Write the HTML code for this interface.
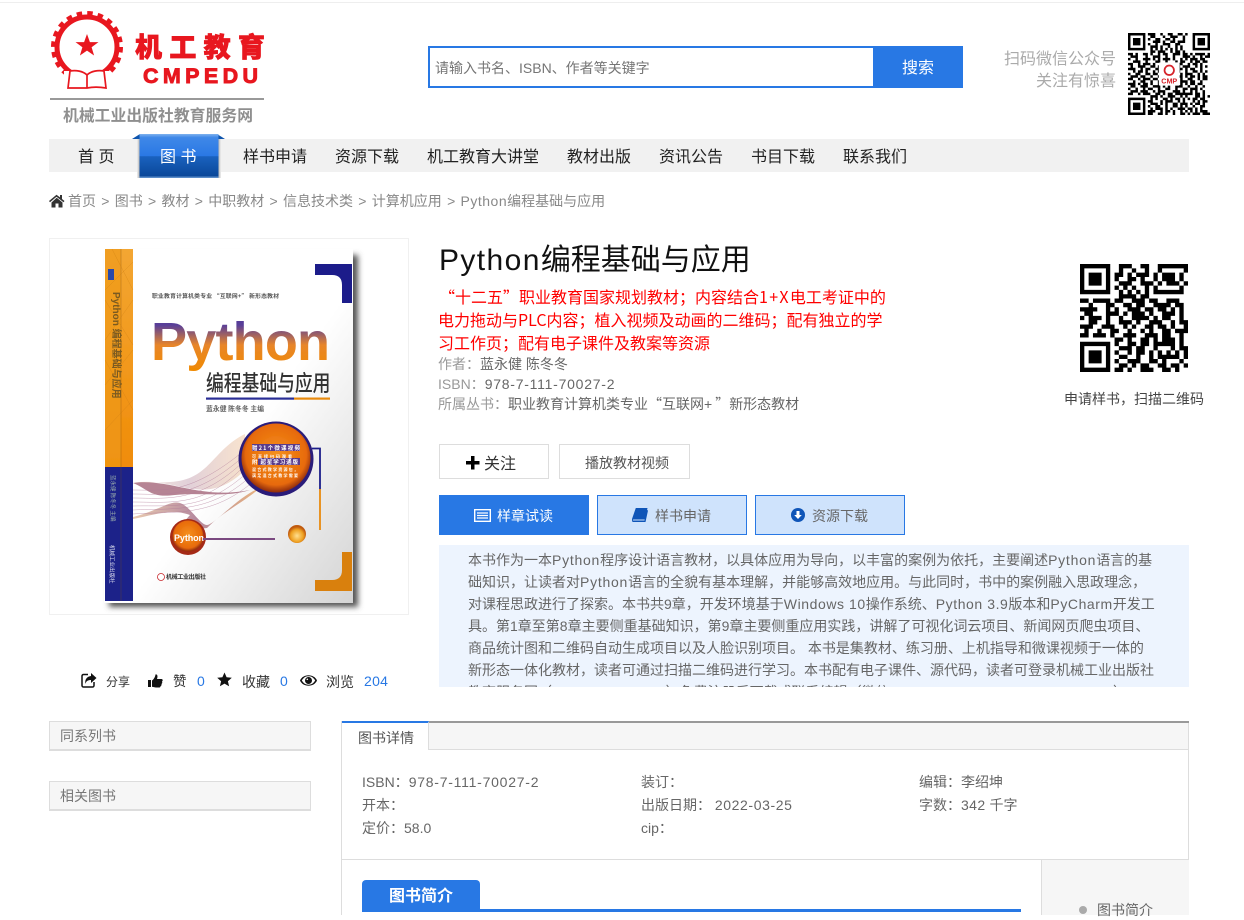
<!DOCTYPE html>
<html lang="zh"><head><meta charset="utf-8"><title>Python编程基础与应用</title>
<style>
html,body{margin:0;padding:0;background:#fff}
body{position:relative;width:1244px;height:915px;overflow:hidden;font-family:"Liberation Sans","Noto Sans CJK SC",sans-serif;font-size:14px;color:#666}
.a{position:absolute;box-sizing:border-box}
.t{position:absolute;white-space:nowrap;line-height:20px;height:20px}
.q{font-family:"Noto Sans CJK SC",sans-serif}
.n{font-size:16px;color:#222;top:148px}
.d{left:468px;color:#666}
.l{letter-spacing:.75px}
.m{letter-spacing:.57px}
.btn{position:absolute;box-sizing:border-box;height:40px;width:150px;top:495px;border:1px solid #2878e4;background:#cfe3fc;color:#666;line-height:41px;font-size:14px}
.box{position:absolute;left:49px;width:262px;height:30px;box-sizing:border-box;background:#f6f6f6;border:1px solid #ddd;border-bottom-width:2px;color:#777;line-height:29px;padding-left:10px}
.r{color:#666}
svg{position:absolute;left:0;top:0}
</style></head><body>
<div class="a" style="left:0;top:2px;width:1244px;height:1px;background:#eee"></div>

<!-- logo -->
<svg width="300" height="130" viewBox="0 0 300 130">
<circle cx="87" cy="47" r="34" fill="none" stroke="#e8171f" stroke-width="4" stroke-dasharray="5.500 5.180"/>
<circle cx="87" cy="47" r="30" fill="#fff" stroke="#e8171f" stroke-width="5"/>
<path d="M87 34l2.900 8.100h8.600l-6.900 5.200 2.500 8.200-7.100-4.900-7.100 4.900 2.500-8.200-6.900-5.200h8.600z" fill="#e8171f"/>
<path d="M64 71h46v20H64z" fill="#fff"/>
<path d="M87 75c-4-4-11-5-17-4l-2 17h19c5-1 13-1 19 0l-2-17c-6-1-13 0-17 4zM87 75v13" fill="#fff" stroke="#e8171f" stroke-width="1.700"/>
<text x="135" y="57" font-family="'Noto Sans CJK SC',sans-serif" font-weight="900" font-size="27" fill="#e8171f" textLength="130" stroke="#e8171f" stroke-width=".7">机工教育</text>
<text x="143" y="83" font-family="'Liberation Sans',sans-serif" font-weight="700" font-size="21.500" fill="#e8171f" textLength="115" stroke="#e8171f" stroke-width=".9">CMPEDU</text>
<rect x="50" y="98" width="214" height="2" fill="#999"/>
<text x="63" y="121" font-family="'Noto Sans CJK SC',sans-serif" font-weight="700" font-size="15.800" fill="#8f8f8f" textLength="190">机械工业出版社教育服务网</text>
</svg>

<!-- search -->
<div class="a" style="left:428px;top:46px;width:535px;height:42px;border:2px solid #2878e4;background:#fff"></div>
<div class="a" style="left:873px;top:46px;width:90px;height:42px;background:#2878e4;color:#fff;font-size:16px;line-height:45px;text-align:center">搜索</div>
<div class="t" style="left:435px;top:58px;color:#757575">请输入书名、ISBN、作者等关键字</div>
<div class="t" style="left:1004px;top:50px;font-size:16px;color:#aaa">扫码微信公众号</div>
<div class="t" style="left:1036px;top:72px;font-size:16px;color:#aaa">关注有惊喜</div>

<!-- small QR -->
<svg style="left:1128px;top:33px" width="82" height="82" viewBox="0 0 33 33">
<path fill="none" stroke="#000" d="M0 .5h7m1 0h3m2 0h1m2 0h2m2 0h2m1 0h1M0 6.500h7m2 0h1m1 0h1m1 0h1m1 0h1m1 0h1m1 0h1m1 0h1M0 1.500h1m5 0h1m2 0h2m3 0h1m2 0h3m2 0h1M0 2.500h1m1 0h3m1 0h1m1 0h1m2 0h2m2 0h2m1 0h1m3 0h1M0 3.500h1m1 0h3m1 0h1m3 0h3m1 0h1m2 0h2m1 0h3M0 4.500h1m1 0h3m1 0h1m1 0h1m2 0h1m2 0h3m2 0h2M0 5.500h1m5 0h1m2 0h3m1 0h1m2 0h1m2 0h1m1 0h1M9 7.500h2m1 0h3m2 0h1m1 0h2m1 0h1M0 8.500h2m1 0h1m2 0h2m1 0h1m2 0h1m1 0h2m2 0h3m1 0h2m1 0h1m1 0h4m1 0h2M1 9.500h3m3 0h1m2 0h3m2 0h1m2 0h1m3 0h3m1 0h1m2 0h1m1 0h2M0 10.500h1m2 0h1m2 0h3m1 0h1m1 0h1m1 0h3m1 0h1m2 0h1m1 0h1m1 0h3m1 0h2M2 11.500h3m2 0h1m3 0h2m2 0h1m3 0h1m1 0h2m2 0h1m1 0h2m1 0h2M0 12.500h2m2 0h1m1 0h3m1 0h1m2 0h6m1 0h2m2 0h1m1 0h2m1 0h1M1 13.500h1m2 0h3m2 0h2m1 0h1m7 0h1m1 0h3m2 0h1m1 0h1m1 0h1M0 14.500h3m2 0h1m1 0h2m2 0h2m7 0h2m1 0h1m1 0h2m2 0h1M2 15.500h1m1 0h2m1 0h1m2 0h1m1 0h1m7 0h1m2 0h1m2 0h2m1 0h1m1 0h1M0 16.500h1m2 0h2m2 0h2m1 0h2m1 0h1m7 0h1m1 0h3m2 0h1m1 0h1M1 17.500h3m1 0h2m2 0h1m2 0h1m7 0h2m1 0h1m1 0h2m1 0h1m1 0h2M0 18.500h2m2 0h1m1 0h3m1 0h2m1 0h7m1 0h1m2 0h2m2 0h1m1 0h2M2 19.500h1m2 0h2m2 0h1m2 0h2m2 0h1m1 0h2m1 0h3m1 0h2m2 0h1M0 20.500h3m1 0h1m1 0h2m1 0h1m2 0h1m2 0h2m2 0h1m1 0h1m1 0h1m1 0h2m1 0h2M1 21.500h2m2 0h3m2 0h3m1 0h1m1 0h1m2 0h3m2 0h1m2 0h1m2 0h1M0 22.500h1m2 0h1m2 0h1m1 0h2m2 0h1m2 0h2m2 0h1m2 0h2m1 0h3m1 0h1M1 23.500h3m1 0h3m2 0h1m1 0h3m3 0h3m1 0h1m2 0h1m1 0h1m2 0h1M0 24.500h2m2 0h1m1 0h3m2 0h2m1 0h1m1 0h2m1 0h7m1 0h2m1 0h1M9 25.500h3m1 0h1m2 0h3m2 0h1m1 0h1m3 0h2m1 0h1m1 0h2M0 26.500h7m2 0h1m1 0h1m2 0h2m1 0h1m1 0h2m1 0h1m1 0h1m1 0h2m1 0h2M0 32.500h7m1 0h2m2 0h2m1 0h1m2 0h1m2 0h2m1 0h1m1 0h3m1 0h3M0 27.500h1m5 0h1m1 0h2m3 0h1m1 0h3m2 0h1m1 0h1m3 0h1m1 0h1m1 0h2M0 28.500h1m1 0h3m1 0h1m2 0h3m1 0h1m1 0h1m2 0h2m1 0h3m1 0h1m1 0h2m1 0h1M0 29.500h1m1 0h3m1 0h1m1 0h1m2 0h2m2 0h1m2 0h2m1 0h1m1 0h1m2 0h1m2 0h2M0 30.500h1m1 0h3m1 0h1m2 0h1m1 0h3m1 0h1m1 0h1m2 0h3m1 0h2m1 0h1m1 0h1M0 31.500h1m5 0h1m1 0h3m2 0h1m1 0h2m1 0h1m2 0h1m1 0h1m1 0h1m1 0h1m1 0h3"/>
<path fill="none" stroke="#000" d="M26.500 .5h6v6h-6z"/><rect x="28" y="2" width="3" height="3"/>
<rect x="12.400" y="11.800" width="8.400" height="9.400" fill="#fff" rx=".6"/>
<circle cx="16.600" cy="15" r="1.900" fill="#fff" stroke="#d6232a" stroke-width=".7"/>
<text x="16.600" y="20.400" font-size="2.900" font-weight="700" fill="#d6232a" text-anchor="middle" font-family="'Liberation Sans',sans-serif">CMP</text>
</svg>

<!-- nav -->
<div class="a" style="left:49px;top:139px;width:1140px;height:33px;background:#f1f1f1"></div>
<svg style="left:130px;top:130px" width="100" height="52">
<defs>
<linearGradient id="tb" x1="0" y1="0" x2="0" y2="1"><stop offset="0" stop-color="#7fb2ee"/><stop offset=".08" stop-color="#3f88e8"/><stop offset=".5" stop-color="#2a78e4"/><stop offset=".51" stop-color="#1a62bf"/><stop offset="1" stop-color="#094595"/></linearGradient>
<linearGradient id="sl" x1="0" y1="0" x2="1" y2="0"><stop offset="0" stop-color="#f1f1f1"/><stop offset="1" stop-color="#aaa"/></linearGradient>
<linearGradient id="sr" x1="0" y1="0" x2="1" y2="0"><stop offset="0" stop-color="#aaa"/><stop offset="1" stop-color="#f1f1f1"/></linearGradient>
</defs>
<path d="M2 9l8-5v5zM95 9l-8-5v5z" fill="#0f55ad"/>
<rect x="7" y="9" width="3" height="39" fill="url(#sl)"/><rect x="88" y="9" width="3" height="39" fill="url(#sr)"/>
<rect x="9.500" y="4" width="79" height="44" fill="url(#tb)"/>
<rect x="9.500" y="46.500" width="79" height="1.500" fill="#5b8cc8"/>
</svg>
<div class="t n" style="left:78px">首 页</div>
<div class="t n" style="left:160px;color:#fff">图 书</div>
<div class="t n" style="left:243px">样书申请</div>
<div class="t n" style="left:335px">资源下载</div>
<div class="t n" style="left:427px">机工教育大讲堂</div>
<div class="t n" style="left:567px">教材出版</div>
<div class="t n" style="left:659px">资讯公告</div>
<div class="t n" style="left:751px">书目下载</div>
<div class="t n" style="left:843px">联系我们</div>

<!-- breadcrumb -->
<svg style="left:49px;top:194px" width="16" height="14" viewBox="0 0 16 14"><path d="M7.500 .8L0 7l1 1.200L7.500 2.800 14.500 8.200 15.500 7l-2.500-2V1h-2v2.400zM2.500 8.500V13.500h4V9.500h3v4h4V8.500L7.700 3.800z" fill="#333"/></svg>
<div class="t" style="left:68px;top:191px;color:#888;word-spacing:1.400px">首页 &gt; 图书 &gt; 教材 &gt; 中职教材 &gt; 信息技术类 &gt; 计算机应用 &gt; <span style="letter-spacing:.5px">Python</span>编程基础与应用</div>

<!-- cover -->
<div class="a" style="left:49px;top:238px;width:360px;height:377px;border:1px solid #f0f0f0"></div>
<svg width="420" height="620" viewBox="0 0 420 620">
<defs>
<filter id="bl" x="-10%" y="-10%" width="120%" height="120%"><feGaussianBlur stdDeviation=".35"/></filter>
<filter id="sh" x="-20%" y="-20%" width="140%" height="140%"><feGaussianBlur stdDeviation="3"/></filter>
<linearGradient id="pg" x1="0" y1="0" x2="0" y2="1"><stop offset="0" stop-color="#4a3a9c"/><stop offset=".22" stop-color="#5a3f98"/><stop offset=".55" stop-color="#e8862a"/><stop offset="1" stop-color="#f08a00"/></linearGradient>
<linearGradient id="cv" x1="0" y1="0" x2="1" y2="1"><stop offset="0" stop-color="#fff"/><stop offset=".55" stop-color="#fff"/><stop offset="1" stop-color="#d4d4d4"/></linearGradient>
<linearGradient id="sp" x1="0" y1="0" x2="0" y2="1"><stop offset="0" stop-color="#f3a632"/><stop offset="1" stop-color="#f08c08"/></linearGradient>
<radialGradient id="oc" cx=".5" cy=".45" r=".55"><stop offset="0" stop-color="#f59020"/><stop offset=".8" stop-color="#e76a08"/><stop offset="1" stop-color="#8c2a10"/></radialGradient>
<radialGradient id="yb" cx=".5" cy=".6" r=".5"><stop offset="0" stop-color="#ffe090"/><stop offset=".7" stop-color="#eea020"/><stop offset="1" stop-color="#c05a10"/></radialGradient>
<linearGradient id="wv" x1="0" y1="0" x2="1" y2="0"><stop offset="0" stop-color="#d8a070"/><stop offset=".5" stop-color="#7a2a50"/><stop offset="1" stop-color="#e08020"/></linearGradient>
</defs>
<rect x="109" y="255" width="249" height="352" fill="#555" filter="url(#sh)"/>
<g filter="url(#bl)">
<rect x="104" y="249" width="249" height="354" fill="url(#cv)"/>
<rect x="105" y="249" width="28" height="218" fill="url(#sp)"/>
<rect x="105" y="249" width="16" height="218" fill="#ef9a18" opacity=".6"/>
<rect x="105" y="467" width="28" height="134" fill="#1a2389"/>
<rect x="120.500" y="249" width="1" height="352" fill="#7a4a10" opacity=".3"/>
<path d="M105 290L133 262M105 340L133 300M105 385L133 350M105 430L133 400M112 249L133 290M105 300L133 345M105 360L133 410" fill="none" stroke="#c87a10" stroke-width=".4" opacity=".6"/>
<rect x="108" y="269" width="6" height="11" fill="#2a4aa8"/>
<text transform="translate(113,292) rotate(90)" font-size="10" font-weight="700" fill="#7a5a20" font-family="'Liberation Sans','Noto Sans CJK SC',sans-serif">Python 编程基础与应用</text>
<text transform="translate(111,475) rotate(90)" font-size="5.500" fill="#9aa" font-family="'Noto Sans CJK SC',sans-serif">蓝永健 陈冬冬 主编</text>
<text transform="translate(110,545) rotate(90)" font-size="5.500" fill="#dde" font-family="'Noto Sans CJK SC',sans-serif">机械工业出版社</text>
<path d="M315 264h37v39h-10v-18q0-10-10-10h-17z" fill="#1a1f8a"/>
<path d="M342 552h10v39h-37v-11h17q10 0 10-10z" fill="#d9800c"/>
<text x="152" y="298" font-size="5.800" font-weight="700" fill="#555" textLength="127" font-family="'Noto Sans CJK SC',sans-serif">职业教育计算机类专业 “互联网+” 新形态教材</text>
<text x="151" y="360" font-size="54" font-weight="700" fill="url(#pg)" textLength="179" font-family="'Liberation Sans',sans-serif">Python</text>
<text transform="translate(206,391) scale(1,1.250)" font-size="17.800" font-weight="500" fill="#333" font-family="'Noto Sans CJK SC',sans-serif">编程基础与应用</text>
<rect x="206" y="397.500" width="88" height="2.200" fill="#2b2f96"/><rect x="294" y="397.500" width="36" height="2.200" fill="#e88a10"/>
<text x="206" y="411" font-size="6.800" font-weight="700" fill="#666" textLength="58" font-family="'Noto Sans CJK SC',sans-serif">蓝永健 陈冬冬 主编</text>
<path d="M133 483C175 475 205 510 245 470L245 434C212 450 210 480 170 482S145 482 133 483Z" fill="url(#wv)" opacity=".22"/>
<path d="M133 483C170 478 200 500 250 490C225 498 200 492 175 495S150 490 133 483Z" fill="#7a1f3c" opacity=".55"/>
<path d="M133 517C160 510 170 500 180 503S200 525 207 525 240 495 260 488C240 505 225 510 207 528L175 532L190 515C170 508 155 515 133 519Z" fill="url(#wv)" opacity=".55"/>
<g fill="none" stroke="#b07a98" stroke-width=".35">
<path d="M133 490C165 490 190 495 245 450"/><path d="M133 494C165 494 195 500 245 455"/><path d="M133 498C165 498 200 504 245 460"/><path d="M133 502C170 502 205 508 245 465"/><path d="M133 506C175 505 205 512 250 470"/><path d="M133 510C175 508 210 514 252 475"/><path d="M133 514C175 511 212 518 255 480"/>
</g>
<path d="M312 448.500h8v41" fill="none" stroke="#1a1f8a" stroke-width="1.800"/><path d="M320 489v41" fill="none" stroke="#e88a10" stroke-width="1.800"/>
<circle cx="276" cy="459" r="37.500" fill="#2a1d7a"/><circle cx="276" cy="458" r="34.500" fill="url(#oc)"/>
<rect x="252" y="444" width="48" height="7" fill="#5a3a8a"/><rect x="258" y="458" width="42" height="7" fill="#5a3a8a"/>
<g font-family="'Noto Sans CJK SC',sans-serif" font-size="5.500" fill="#fff" font-weight="700">
<text x="252" y="450" textLength="48">赠21个微课视频</text><text x="252" y="458" font-size="4" textLength="40">可直接扫码观看</text><text x="252" y="464" textLength="46">附 超星学习通版</text><text x="252" y="471" font-size="4" textLength="46">混合式教学资源包，</text><text x="252" y="477" font-size="4" textLength="46">满足混合式教学需要</text>
</g>
<circle cx="188" cy="537" r="18" fill="#a52a18"/><circle cx="188" cy="536" r="15.500" fill="url(#oc)"/>
<text x="174" y="541" font-size="9" font-weight="700" fill="#fff" textLength="30" font-family="'Liberation Sans',sans-serif">Python</text>
<rect x="203" y="538" width="72" height="2" fill="#7a4a80"/>
<circle cx="297" cy="534" r="9" fill="url(#yb)"/>
<circle cx="161" cy="577" r="3.500" fill="#fff" stroke="#c8282c" stroke-width=".8"/>
<text x="166" y="579" font-size="6" font-weight="700" fill="#333" textLength="40" font-family="'Noto Sans CJK SC',sans-serif">机械工业出版社</text>
</g>
</svg>

<!-- info -->
<div class="t" style="left:439px;top:241px;height:40px;line-height:40px;font-size:30px;color:#111"><span style="letter-spacing:1.400px">Python</span>编程基础与应用</div>
<div class="t q" style="left:439px;top:286px;font-size:16px;color:#f00">“十二五”职业教育国家规划教材；内容结合<span style="letter-spacing:1.300px">1+X</span>电工考证中的</div>
<div class="t q" style="left:438px;top:309px;font-size:16px;color:#f00">电力拖动与PLC内容；植入视频及动画的二维码；配有独立的学</div>
<div class="t q" style="left:438px;top:332px;font-size:16px;color:#f00">习工作页；配有电子课件及教案等资源</div>
<div class="t" style="left:438px;top:354px;color:#999">作者：<span style="color:#666">蓝永健 陈冬冬</span></div>
<div class="t" style="left:438px;top:374px;color:#999">ISBN：<span style="color:#666" class="l">978-7-111-70027-2</span></div>
<div class="t" style="left:438px;top:394px;color:#999">所属丛书：<span style="color:#666">职业教育计算机类专业<span class="q">“</span>互联网<span style="letter-spacing:3px">+</span><span class="q">”</span>新形态教材</span></div>

<!-- big QR -->
<svg style="left:1080px;top:264px" width="108" height="108" viewBox="0 0 25 25">
<path fill="none" stroke="#000" d="M0 .5h7m2 0h3m2 0h2m2 0h7M0 6.500h7m2 0h1m1 0h1m1 0h1m1 0h1m1 0h7M0 1.500h1m5 0h1m2 0h1m2 0h1m2 0h1m2 0h1m5 0h1M0 2.500h1m1 0h3m1 0h1m1 0h2m1 0h1m1 0h3m1 0h1m1 0h3m1 0h1M0 3.500h1m1 0h3m1 0h1m1 0h1m2 0h2m1 0h1m2 0h1m1 0h3m1 0h1M0 4.500h1m1 0h3m1 0h1m2 0h3m2 0h3m1 0h1m1 0h3m1 0h1M0 5.500h1m5 0h1m1 0h1m1 0h1m1 0h1m2 0h1m1 0h1m5 0h1M9 7.500h4m1 0h2M0 8.500h2m1 0h4m1 0h2m2 0h3m1 0h2m2 0h3M2 9.500h1m3 0h2m2 0h2m1 0h2m2 0h4m1 0h2M0 10.500h4m2 0h1m1 0h1m2 0h3m1 0h2m1 0h2m1 0h1m1 0h1M1 11.500h2m3 0h3m1 0h1m1 0h3m1 0h1m2 0h3m1 0h1M0 12.500h1m1 0h3m1 0h1m2 0h1m2 0h4m1 0h1m1 0h2m2 0h1M2 13.500h2m2 0h1m2 0h3m1 0h1m2 0h3m2 0h1m1 0h2M0 14.500h3m2 0h3m2 0h1m1 0h1m2 0h2m1 0h2m1 0h1m2 0h1M1 15.500h1m2 0h1m2 0h2m2 0h1m2 0h1m1 0h1m2 0h2m1 0h3M0 16.500h2m1 0h3m1 0h1m2 0h3m2 0h3m1 0h2m2 0h1M8 17.500h2m1 0h1m2 0h2m1 0h1m1 0h3m1 0h1M0 18.500h7m1 0h1m2 0h2m1 0h2m1 0h5m1 0h1M0 24.500h7m1 0h2m1 0h1m2 0h3m2 0h2m1 0h1M0 19.500h1m5 0h1m2 0h3m1 0h2m2 0h1m3 0h1m1 0h2M0 20.500h1m1 0h3m1 0h1m1 0h1m2 0h1m1 0h2m1 0h1m1 0h1m1 0h1m1 0h1m1 0h1M0 21.500h1m1 0h3m1 0h1m2 0h2m2 0h1m2 0h1m1 0h5m1 0h1M0 22.500h1m1 0h3m1 0h1m1 0h1m2 0h3m2 0h2m1 0h1m3 0h1M0 23.500h1m5 0h1m2 0h2m1 0h1m1 0h2m2 0h2m1 0h2m1 0h1"/>
</svg>
<div class="t" style="left:1064px;top:389px;color:#444;font-size:14px">申请样书，扫描二维码</div>

<!-- buttons -->
<div class="a" style="left:439px;top:444px;width:110px;height:35px;border:1px solid #ddd"></div>
<svg style="left:466px;top:456px" width="14" height="14"><path d="M5 0h3.500v5H13.500v3.500H8.500V13.500H5V8.500H0V5H5z" fill="#000"/></svg>
<div class="t" style="left:484px;top:455px;font-size:16px;color:#333">关注</div>
<div class="a" style="left:559px;top:444px;width:131px;height:35px;border:1px solid #ddd"></div>
<div class="t" style="left:585px;top:453px;color:#555">播放教材视频</div>
<div class="btn" style="left:439px;background:#2878e4;color:#fff;padding-left:57px">样章试读</div>
<svg style="left:474px;top:509px" width="17" height="13"><path d="M.7.7h15.600v11.600H.7z" fill="none" stroke="#fff" stroke-width="1.400"/><path d="M3 4h11M3 6.500h11M3 9h11" stroke="#fff" stroke-width="1.200"/></svg>
<div class="btn" style="left:597px;padding-left:57px">样书申请</div>
<svg style="left:632px;top:508px" width="16" height="14" viewBox="0 0 16 14"><path d="M3.800 0H15.500L13 11.500H2C.8 11.500.5 12 1 12.500h11.500L15 2l1 .5-2.500 11.500H1.500C0 14-.4 12.500 0 11z" fill="#0f55b8"/></svg>
<div class="btn" style="left:755px;padding-left:56px">资源下载</div>
<svg style="left:791px;top:508px" width="14" height="14" viewBox="0 0 14 14"><circle cx="7" cy="7" r="7" fill="#0f55b8"/><path d="M5.500 3h3v4h2.300L7 11 3.200 7h2.300z" fill="#fff"/></svg>

<!-- description -->
<div class="a" style="left:439px;top:545px;width:750px;height:142px;background:#edf4fe;overflow:hidden">
<div class="t d" style="left:29px;top:5px">本书作为一本<span class="l">Python</span>程序设计语言教材，以具体应用为导向，以丰富的案例为依托，主要阐述<span class="l">Python</span>语言的基</div>
<div class="t d" style="left:29px;top:27px">础知识，让读者对<span class="l">Python</span>语言的全貌有基本理解，并能够高效地应用。与此同时，书中的案例融入思政理念，</div>
<div class="t d" style="left:29px;top:49px">对课程思政进行了探索。本书共9章，开发环境基于<span class="m">Windows 10</span>操作系统、<span class="m">Python 3.9</span>版本和<span class="m">PyCharm</span>开发工</div>
<div class="t d" style="left:29px;top:71px">具。第1章至第8章主要侧重基础知识，第9章主要侧重应用实践，讲解了可视化词云项目、新闻网页爬虫项目、</div>
<div class="t d" style="left:29px;top:93px">商品统计图和二维码自动生成项目以及人脸识别项目。 本书是集教材、练习册、上机指导和微课视频于一体的</div>
<div class="t d" style="left:29px;top:115px">新形态一体化教材，读者可通过扫描二维码进行学习。本书配有电子课件、源代码，读者可登录机械工业出版社</div>
<div class="t d" style="left:29px;top:137px">教育服务网（www.cmpedu.com）免费注册后下载或联系编辑（微信：13520 88379194，QQ：2024615）</div>
</div>

<!-- stats -->
<svg style="left:81px;top:673px" width="16" height="15" viewBox="0 0 16 15"><path d="M10 0l5.500 5L10 10V7C7 7 5 8 4.500 11 3.500 7 5.500 3.500 10 3z" fill="#111"/><path d="M7 1.500H2.500A1.500 1.500 0 0 0 1 3v9.500A1.500 1.500 0 0 0 2.500 14h9a1.500 1.500 0 0 0 1.500-1.500V9" fill="none" stroke="#111" stroke-width="1.500"/></svg>
<div class="t" style="left:106px;top:672px;font-size:12px;color:#333">分享</div>
<svg style="left:148px;top:674px" width="15" height="14" viewBox="0 0 15 14"><path d="M0 6h3v7H0zM4 6.500c1.500-1 3-3 3.500-6 2-.5 2.500 2 1.500 4.500h4.500c1.500 0 1.500 2 .5 2.500.5 1 .3 2-.5 2.400.2 1 0 2-1 2.300 0 1-.7 1.300-1.500 1.300H8C6.500 13.500 5.500 13 4 12.800z" fill="#111"/></svg>
<div class="t" style="left:173px;top:672px;font-size:13.500px;color:#333">赞</div>
<div class="t" style="left:197px;top:671px;color:#2878e4">0</div>
<svg style="left:217px;top:672px" width="15" height="15" viewBox="0 0 15 15"><path d="M7.500 .5l2.100 4.800 5.200.5-3.900 3.400 1.200 5.100-4.600-2.700-4.600 2.700 1.200-5.100L.2 5.800l5.200-.5z" fill="#111"/></svg>
<div class="t" style="left:242px;top:672px;color:#333">收藏</div>
<div class="t" style="left:280px;top:671px;color:#2878e4">0</div>
<svg style="left:300px;top:674px" width="17" height="13" viewBox="0 0 17 13"><path d="M0 6.500C3-.5 14-.5 17 6.500 14 13.500 3 13.500 0 6.500z" fill="#111"/><path d="M1.800 6.500C4 3 6 2.300 8.500 2.300S13 3 15.200 6.500C13 10 11 10.700 8.500 10.700S4 10 1.800 6.500z" fill="#fff"/><circle cx="8.500" cy="6.500" r="3.500" fill="#111"/><circle cx="7.300" cy="5.300" r=".8" fill="#fff"/></svg>
<div class="t" style="left:326px;top:672px;color:#333">浏览</div>
<div class="t" style="left:364px;top:671px;color:#2878e4;letter-spacing:.3px">204</div>

<!-- sidebar -->
<div class="box" style="top:721px">同系列书</div>
<div class="box" style="top:781px">相关图书</div>

<!-- detail -->
<div class="a" style="left:341px;top:721px;width:848px;height:194px;border-left:1px solid #ddd;border-right:1px solid #ddd"></div>
<div class="a" style="left:342px;top:722px;width:846px;height:28px;background:#f6f6f6;border-bottom:1px solid #ddd"></div>
<div class="a" style="left:342px;top:721px;width:847px;height:2px;background:#999"></div>
<div class="a" style="left:342px;top:721px;width:87px;height:29px;background:#fff;border-top:2px solid #2878e4;border-right:1px solid #ddd"></div>
<div class="t" style="left:358px;top:728px;color:#555">图书详情</div>
<div class="t r" style="left:362px;top:772px">ISBN：<span class="l">978-7-111-70027-2</span></div>
<div class="t r" style="left:362px;top:795px">开本：</div>
<div class="t r" style="left:362px;top:818px">定价：58.0</div>
<div class="t r" style="left:641px;top:772px">装订：</div>
<div class="t r" style="left:641px;top:795px">出版日期： <span style="letter-spacing:.6px">2022-03-25</span></div>
<div class="t r" style="left:641px;top:818px">cip：</div>
<div class="t r" style="left:919px;top:772px">编辑：李绍坤</div>
<div class="t r" style="left:919px;top:795px">字数：<span style="letter-spacing:.4px">342</span> 千字</div>
<div class="a" style="left:341px;top:859px;width:848px;height:1px;background:#ddd"></div>
<div class="a" style="left:1041px;top:860px;width:148px;height:55px;background:#f6f6f6;border-left:1px solid #ddd"></div>
<div class="a" style="left:362px;top:880px;width:118px;height:30px;background:#2878e4;border-radius:4px 4px 0 0;color:#fff;font-weight:700;font-size:16px;line-height:34px;padding-left:27px">图书简介</div>
<div class="a" style="left:362px;top:909px;width:659px;height:3px;background:#2878e4"></div>
<div class="a" style="left:1079px;top:906px;width:8px;height:8px;border-radius:50%;background:#aaa"></div>
<div class="t" style="left:1097px;top:900px;color:#666">图书简介</div>
</body></html>
